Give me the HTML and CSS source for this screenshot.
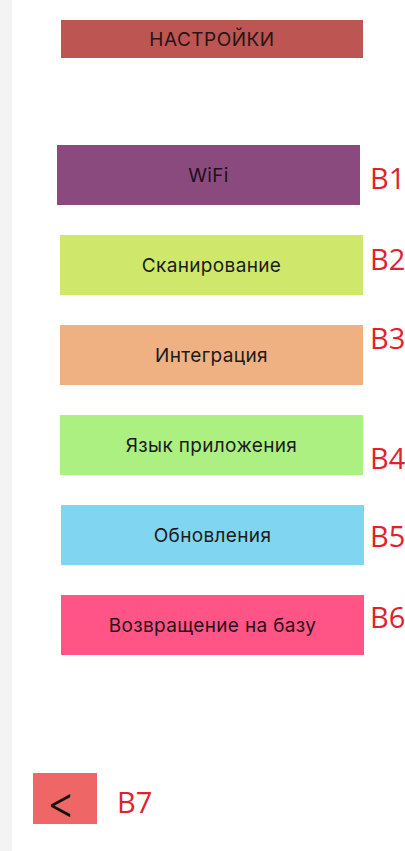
FILE: index.html
```html
<!DOCTYPE html>
<html lang="ru">
<head>
<meta charset="utf-8">
<title>Настройки</title>
<link rel="stylesheet" href="styles.css">
</head>
<body>
<div class="app">
  <div class="rail"></div>
  <main class="main">
    <div class="title">НАСТРОЙКИ</div>
    <div class="menu">
      <div class="row">
        <div class="btn btn-wifi">WiFi</div>
        <span class="tag tag-1">B1</span>
      </div>
      <div class="row">
        <div class="btn btn-scan">Сканирование</div>
        <span class="tag tag-2">B2</span>
      </div>
      <div class="row">
        <div class="btn btn-integ">Интеграция</div>
        <span class="tag tag-3">B3</span>
      </div>
      <div class="row">
        <div class="btn btn-lang">Язык приложения</div>
        <span class="tag tag-4">B4</span>
      </div>
      <div class="row">
        <div class="btn btn-upd">Обновления</div>
        <span class="tag tag-5">B5</span>
      </div>
      <div class="row">
        <div class="btn btn-home">Возвращение на базу</div>
        <span class="tag tag-6">B6</span>
      </div>
    </div>
    <div class="back-row">
      <div class="back"><span class="back-glyph">&lt;</span></div>
      <span class="tag tag-7">B7</span>
    </div>
  </main>
</div>
</body>
</html>
```
FILE: styles.css
```css
* { box-sizing: border-box; }
html, body {
  margin: 0;
  padding: 0;
  background: #ffffff;
}
body {
  font-family: Inter, "Noto Sans", sans-serif;
  color: #1b1b1b;
}
.app {
  display: flex;
  min-height: 851px;
}
.rail {
  width: 12px;
  flex: 0 0 12px;
  background: #f3f3f3;
}
.main {
  flex: 1;
  display: flex;
  flex-direction: column;
}
.title {
  margin: 20px 0 0 49px;
  width: 302px;
  height: 38px;
  background: #bd5553;
  display: flex;
  align-items: center;
  justify-content: center;
  font-size: 19px;
  letter-spacing: 0.5px;
  color: #2a1414;
}
.menu {
  margin-top: 87px;
  display: flex;
  flex-direction: column;
  gap: 30px;
}
.row {
  display: grid;
  grid-template-columns: 358px auto;
  align-items: start;
}
.btn {
  margin-left: 48px;
  width: 303px;
  height: 60px;
  display: flex;
  align-items: center;
  justify-content: center;
  font-size: 19px;
  letter-spacing: 0.35px;
}
.btn-wifi { margin-left: 45px; background: #8b4a7e; color: #1e0f1c; }
.btn-scan { background: #cfe86b; }
.btn-integ { background: #efb181; }
.btn-lang { background: #abf081; }
.btn-upd { margin-left: 49px; background: #80d5f0; }
.btn-home { margin-left: 49px; background: #ff5586; color: #2a0f18; }
.tag {
  font-family: "Open Sans", "Noto Sans", sans-serif;
  font-size: 29px;
  line-height: 30px;
  color: #e0222e;
}
.tag-1 { margin-top: 18px; }
.tag-2 { margin-top: 9px; }
.tag-3 { margin-top: -2px; }
.tag-4 { margin-top: 28px; }
.tag-5 { margin-top: 16px; }
.tag-6 { margin-top: 7px; }
.back-row {
  margin-top: 118px;
  display: flex;
  align-items: flex-start;
}
.back {
  margin-left: 21px;
  width: 64px;
  height: 51px;
  background: #ee6666;
  display: flex;
  align-items: center;
  justify-content: center;
  padding: 6px 8px 0 0;
}
.back-glyph {
  font-size: 44px;
  font-weight: 300;
  line-height: 1;
  color: #111111;
}
.tag-7 {
  margin-left: 20px;
  margin-top: 14px;
}
```
